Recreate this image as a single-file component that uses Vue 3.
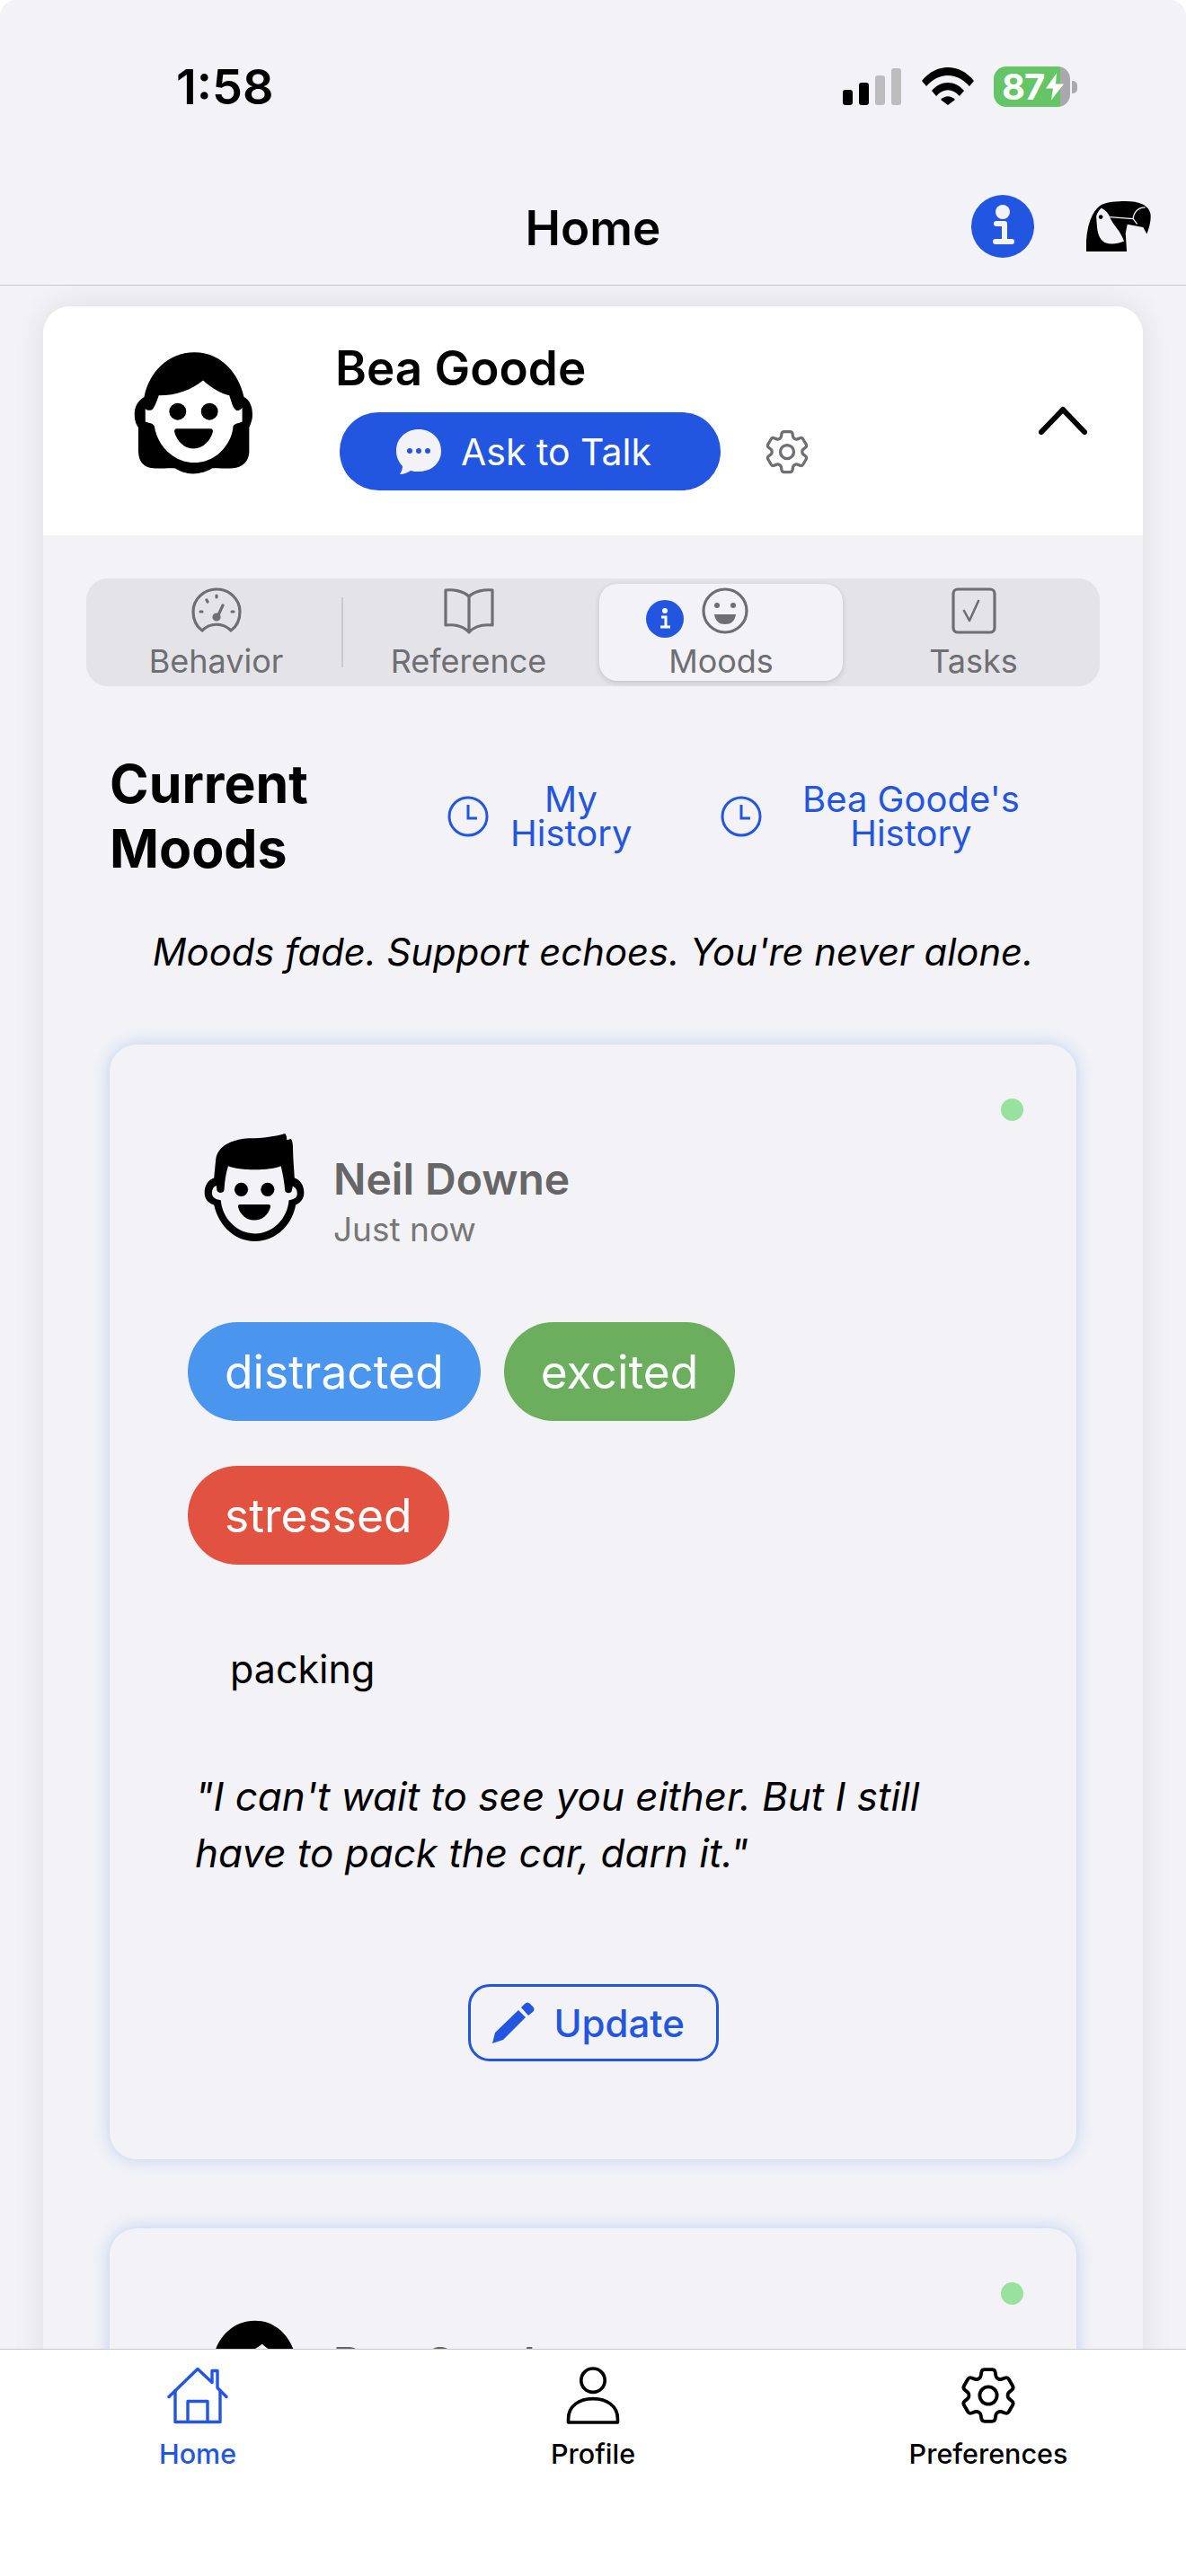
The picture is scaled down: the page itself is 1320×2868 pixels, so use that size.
<template>
  <div class="screen">
    <!-- top bars -->
    <header class="top">
      <div class="status">
        <span class="time">1:58</span>
        <div class="status-icons">
          <svg class="signal" viewBox="0 0 65 41">
            <rect x="0" y="24" width="11" height="17" rx="3" fill="#000" />
            <rect x="18" y="16" width="11" height="25" rx="3" fill="#000" />
            <rect x="36" y="8" width="11" height="33" rx="3" fill="#bdbdc0" />
            <rect x="54" y="0" width="11" height="41" rx="3" fill="#bdbdc0" />
          </svg>
          <svg class="wifi" viewBox="0 0 58 42">
            <path d="M0 15C16-5 42-5 58 15l-5 6C39 5 19 5 5 21z" fill="#000" />
            <path d="M11 26C21 14 37 14 47 26l-5 6C34 23 24 23 16 32z" fill="#000" />
            <path d="M21 36c5-5 11-5 16 0l-8 6z" fill="#000" />
          </svg>
          <div class="battery">
            <div class="battery-body">
              <span class="battery-num">87</span>
              <svg class="bolt" viewBox="0 0 20 30"><path d="M12 0L0 17h8L6 30 20 12h-9z" fill="#fff" /></svg>
            </div>
            <div class="battery-nub"></div>
          </div>
        </div>
      </div>
      <div class="nav">
        <h1 class="nav-title">Home</h1>
        <svg class="nav-info" viewBox="0 0 70 70">
          <circle cx="35" cy="35" r="35" fill="#2356e0" />
          <circle cx="35" cy="19" r="8" fill="#f2f2f7" />
          <path d="M28 32h9v20M27 52h18" fill="none" stroke="#f2f2f7" stroke-width="6" stroke-linecap="round" stroke-linejoin="round" />
        </svg>
        <svg class="toucan" viewBox="0 0 214 166">
          <path d="M0 166V130C3 80 20 30 50 12 70 2 100 0 130 0c40 0 75 10 82 40 4 20-4 50-12 68l-4-8-8-14-52-10-6 30 4 60z" fill="#000" />
          <path d="M33 50C36 38 42 30 50 22c14 8 24 18 28 30 4 14 18 30 28 44 8 12 14 24 19 36-20 8-40 12-60 6-20-8-28-30-30-60z" fill="#f2f2f7" />
          <circle cx="48" cy="52" r="7" fill="#000" />
          <path d="M78 52l77 6 13 17M155 58c2-22 16-38 40-38" fill="none" stroke="#f2f2f7" stroke-width="4" />
        </svg>
      </div>
    </header>

    <main class="scroll">
      <section class="panel">
        <div class="panel-head">
          <svg class="head-avatar" viewBox="140 88 415 425">
            <path d="M350 92c90 0 150 68 170 153 25 13 32 45 28 75-3 15-8 25-10 30v80c0 40-28 60-68 60-30 0-50-2-60 0-15 10-40 18-65 18s-45-8-60-18c-15-2-35 0-65 0-40 0-62-20-62-60v-80c-8-10-13-25-13-45 0-25 10-47 33-60C195 160 260 92 350 92z" fill="#000" />
            <path d="M380 188c30 27 60 44 90 52 8 25 13 45 25 52 10 0 17-7 19-10v48c-9 5-24 5-31 15-3 55-53 125-133 125s-130-70-137-125c-5-10-18-10-31-15v-45c3 5 13 7 21 5 9-5 17-25 25-50 62 0 112-20 152-52z" fill="#fff" />
            <circle cx="293" cy="295" r="29" fill="#000" />
            <circle cx="402" cy="295" r="29" fill="#000" />
            <path d="M290 354h115c7 0 10 6 8 12-8 29-33 56-66 56s-57-27-65-56c-2-6 2-12 8-12z" fill="#000" />
          </svg>
          <div class="head-info">
            <div class="head-name">Bea Goode</div>
            <div class="head-actions">
              <button class="talk-btn">
                <svg class="talk-icon" viewBox="0 0 50 50">
                  <path d="M25 0c14 0 25 10 25 24S39 47 25 47c-3 0-6 0-9-1-3 2-7 4-12 4 2-3 3-6 3-9C3 37 0 31 0 24 0 10 11 0 25 0z" fill="#f2f2f7" />
                  <circle cx="15" cy="24" r="3" fill="#2356e0" />
                  <circle cx="25" cy="24" r="3" fill="#2356e0" />
                  <circle cx="35" cy="24" r="3" fill="#2356e0" />
                </svg>
                <span>Ask to Talk</span>
              </button>
              <svg class="head-gear" viewBox="2 2 20 20" fill="none" stroke="#6e6e73" stroke-width="1.3">
                <path :d="gearPath" />
                <circle cx="12" cy="12" r="3" />
              </svg>
            </div>
          </div>
          <svg class="chevron" viewBox="0 0 54 32">
            <path d="M3 29L27 4l24 25" fill="none" stroke="#000" stroke-width="6" stroke-linecap="round" stroke-linejoin="round" />
          </svg>
        </div>

        <nav class="tabs">
          <div v-for="tab in tabs" :key="tab.name" class="tab" :class="{ active: tab.name === 'Moods' }">
            <svg class="tab-icon" viewBox="0 0 56 52" fill="none" stroke="#6e6e73" stroke-width="3.2" stroke-linecap="round" stroke-linejoin="round">
              <template v-if="tab.name === 'Behavior'">
                <path d="M12 48C5 43 2 35 2 27a26 25 0 0 1 52 0c0 8-3 16-10 21-9-9-23-9-32 0z" />
                <path d="M28 35l7-15M10 27h2M45 27h2M17 14l1 2M28 9v2" />
                <circle cx="28" cy="33" r="3" fill="#6e6e73" />
              </template>
              <template v-else-if="tab.name === 'Reference'">
                <path d="M28 10C22 4 10 2 2 3v39c10-1 20 1 26 8 6-7 16-9 26-8V3c-8-1-20 1-26 7zM28 10v40" />
              </template>
              <template v-else-if="tab.name === 'Moods'">
                <circle cx="28" cy="26" r="24" />
                <circle cx="19" cy="20" r="3" fill="#6e6e73" stroke="none" />
                <circle cx="37" cy="20" r="3" fill="#6e6e73" stroke="none" />
                <path d="M16 30h24c-1 8-6 11-12 11s-11-3-12-11z" fill="#6e6e73" stroke="none" />
              </template>
              <template v-else>
                <rect x="5" y="2" width="46" height="48" rx="5" />
                <path d="M17 26l6 11 10-22" stroke-width="2.6" />
              </template>
            </svg>
            <svg v-if="tab.name === 'Moods'" class="tab-badge" viewBox="0 0 42 42">
              <circle cx="21" cy="21" r="21" fill="#2356e0" />
              <circle cx="21" cy="12" r="3" fill="#fff" />
              <path d="M17 19h5v11M16 30h11" fill="none" stroke="#fff" stroke-width="3" />
            </svg>
            <span class="tab-label">{{ tab.name }}</span>
            <i v-if="tab.name === 'Behavior'" class="tab-divider"></i>
          </div>
        </nav>

        <div class="moods-head">
          <h2 class="moods-title">Current<br />Moods</h2>
          <a v-for="link in historyLinks" :key="link.line1" class="history" :class="link.cls">
            <svg class="clock" viewBox="0 0 46 46" fill="none" stroke="#2356e0" stroke-width="3">
              <circle cx="23" cy="23" r="21" />
              <path d="M23 10v15h10" />
            </svg>
            <span class="history-text">{{ link.line1 }}<br />History</span>
          </a>
        </div>

        <p class="motto">Moods fade. Support echoes. You're never alone.</p>

        <article class="mood-card">
          <i class="online-dot"></i>
          <div class="person">
            <svg class="person-avatar" viewBox="78 60 340 368">
              <path d="M352 62c6 8 6 16 6 22l14-4c8 10 6 30 8 70l4 62c21 6 32 28 32 50 0 23-16 36-28 41-10 62-63 123-138 123s-125-61-138-123c-17-5-32-18-32-41 0-24 12-44 32-50l6-62c4-45 52-68 112-72 50 0 90-6 122-16z" fill="#000" />
              <path d="M160 172c40 16 140 16 178 0 7 28 12 58 14 83 2 10 18 10 22 3l4-18c12 5 15 15 15 25 0 13-8 18-28 22-5 63-55 113-115 113s-110-50-115-113c-20-4-30-9-30-25 0-12 5-19 15-24l2 17c4 10 20 10 24 0 2-30 6-60 14-83z" fill="#f2f2f7" />
              <circle cx="204" cy="251" r="23" fill="#000" />
              <circle cx="293" cy="251" r="23" fill="#000" />
              <path d="M200 302h96c6 0 8 4 6 10-6 23-27 43-54 43-26 0-48-20-54-43-2-6 0-10 6-10z" fill="#000" />
            </svg>
            <div class="person-text">
              <div class="person-name">Neil Downe</div>
              <div class="person-time">Just now</div>
            </div>
          </div>
          <div class="chips">
            <span v-for="chip in chips" :key="chip.label" class="chip" :style="{ background: chip.color }">{{ chip.label }}</span>
          </div>
          <p class="activity">packing</p>
          <p class="quote">"I can't wait to see you either. But I still have to pack the car, darn it."</p>
          <div class="update-row">
            <button class="update-btn">
              <svg class="pencil" viewBox="0 0 48 46">
                <path d="M1 46l3-12L30 9l8 8-25 25z" fill="#2356e0" />
                <path d="M33 6l4-4c2-2 4-2 6 0l3 3c2 2 2 4 0 6l-5 4z" fill="#2356e0" />
              </svg>
              <span>Update</span>
            </button>
          </div>
        </article>

        <article class="mood-card">
          <i class="online-dot"></i>
          <div class="person">
            <svg class="person-avatar" viewBox="140 88 415 425">
              <path d="M350 92c90 0 150 68 170 153 25 13 32 45 28 75-3 15-8 25-10 30v80c0 40-28 60-68 60-30 0-50-2-60 0-15 10-40 18-65 18s-45-8-60-18c-15-2-35 0-65 0-40 0-62-20-62-60v-80c-8-10-13-25-13-45 0-25 10-47 33-60C195 160 260 92 350 92z" fill="#000" />
              <path d="M380 188c30 27 60 44 90 52 8 25 13 45 25 52 10 0 17-7 19-10v48c-9 5-24 5-31 15-3 55-53 125-133 125s-130-70-137-125c-5-10-18-10-31-15v-45c3 5 13 7 21 5 9-5 17-25 25-50 62 0 112-20 152-52z" fill="#f2f2f7" />
            </svg>
            <div class="person-text">
              <div class="person-name">Bea Goode</div>
            </div>
          </div>
        </article>
      </section>
    </main>

    <!-- bottom navigation -->
    <footer class="bottom">
      <div class="bottom-item current">
        <svg class="bottom-icon" viewBox="0 0 68 63" fill="none" stroke="#2356e0" stroke-width="3.4" stroke-linejoin="round" stroke-linecap="round">
          <path d="M2 33L34 2l16 15V4h6v19l10 10" />
          <path d="M9 26v35h50V26M23 61V38h22v23" />
        </svg>
        <span>Home</span>
      </div>
      <div class="bottom-item">
        <svg class="bottom-icon" viewBox="0 0 58 63" fill="none" stroke="#000" stroke-width="3.6" stroke-linejoin="round">
          <circle cx="29" cy="15" r="13" />
          <path d="M2 61v-4c0-14 12-22 27-22s27 8 27 22v4z" />
        </svg>
        <span>Profile</span>
      </div>
      <div class="bottom-item">
        <svg class="bottom-icon" viewBox="2 2 20 20" fill="none" stroke="#000" stroke-width="1.2">
          <path :d="gearPath" />
          <circle cx="12" cy="12" r="3" />
        </svg>
        <span>Preferences</span>
      </div>
    </footer>
  </div>
</template>

<script setup>
const gearPath = 'M9.594 3.94c.09-.542.56-.94 1.11-.94h2.593c.55 0 1.02.398 1.11.94l.213 1.281c.063.374.313.686.645.87.074.04.147.083.22.127.325.196.72.257 1.075.124l1.217-.456a1.125 1.125 0 0 1 1.37.49l1.296 2.247a1.125 1.125 0 0 1-.26 1.431l-1.003.827c-.293.241-.438.613-.43.992a7.723 7.723 0 0 1 0 .255c-.008.378.137.75.43.991l1.004.827c.424.35.534.955.26 1.43l-1.298 2.247a1.125 1.125 0 0 1-1.369.491l-1.217-.456c-.355-.133-.75-.072-1.076.124a6.47 6.47 0 0 1-.22.128c-.331.183-.581.495-.644.869l-.213 1.281c-.09.543-.56.94-1.11.94h-2.594c-.55 0-1.019-.398-1.11-.94l-.213-1.281c-.062-.374-.312-.686-.644-.87a6.52 6.52 0 0 1-.22-.127c-.325-.196-.72-.257-1.076-.124l-1.217.456a1.125 1.125 0 0 1-1.369-.49l-1.297-2.247a1.125 1.125 0 0 1 .26-1.431l1.004-.827c.292-.24.437-.613.43-.991a6.932 6.932 0 0 1 0-.255c.007-.38-.138-.751-.43-.992l-1.004-.827a1.125 1.125 0 0 1-.26-1.43l1.297-2.247a1.125 1.125 0 0 1 1.37-.491l1.216.456c.356.133.751.072 1.076-.124.072-.044.146-.086.22-.128.332-.183.582-.495.644-.869l.214-1.28Z'

const tabs = [{ name: 'Behavior' }, { name: 'Reference' }, { name: 'Moods' }, { name: 'Tasks' }]

const historyLinks = [
  { line1: 'My', cls: 'history-mine' },
  { line1: "Bea Goode's", cls: 'history-hers' }
]

const chips = [
  { label: 'distracted', color: '#4a96ee' },
  { label: 'excited', color: '#6aae5e' },
  { label: 'stressed', color: '#e25241' }
]
</script>

<style>
html,
body {
  margin: 0;
  background: #fff;
}
</style>

<style scoped>
.screen {
  width: 1320px;
  height: 2868px;
  display: flex;
  flex-direction: column;
  overflow: hidden;
  background: #f2f2f7;
  border-radius: 18px 18px 0 0;
  font-family: Inter, "Liberation Sans", sans-serif;
  color: #000;
}

.top {
  flex: none;
  height: 317px;
  border-bottom: 1px solid #c6c6cb;
  box-sizing: content-box;
}

.status {
  height: 194px;
  display: flex;
  align-items: flex-start;
  justify-content: space-between;
}

.time {
  margin: 64px 0 0 196px;
  font-size: 54px;
  line-height: 66px;
  font-weight: 600;
}

.status-icons {
  display: flex;
  align-items: flex-start;
  margin: 74px 121px 0 0;
}

.signal {
  width: 65px;
  height: 41px;
  margin-top: 2px;
}

.wifi {
  width: 58px;
  height: 42px;
  margin: 1px 22px 0 23px;
}

.battery {
  display: flex;
  align-items: center;
}

.battery-body {
  width: 85px;
  height: 45px;
  border-radius: 14px;
  background: linear-gradient(to right, #65c466 87%, #a9a9ac 87%);
  display: flex;
  align-items: center;
  padding-left: 9px;
  box-sizing: border-box;
}

.battery-num {
  color: #fff;
  font-size: 40px;
  line-height: 45px;
  font-weight: 700;
  letter-spacing: -1px;
}

.bolt {
  width: 20px;
  height: 33px;
  margin-left: 2px;
  flex: none;
}

.battery-nub {
  width: 6px;
  height: 14px;
  margin-left: 2px;
  background: #a9a9ac;
  border-radius: 0 5px 5px 0;
}

.nav {
  position: relative;
  height: 123px;
  display: flex;
  align-items: center;
  justify-content: center;
}

.nav-title {
  margin: 0 0 3px;
  font-size: 53px;
  line-height: 62px;
  font-weight: 600;
}

.nav-info {
  position: absolute;
  left: 1081px;
  top: 23px;
  width: 70px;
  height: 70px;
}

.toucan {
  position: absolute;
  left: 1209px;
  top: 30px;
  width: 72px;
  height: 56px;
}

.scroll {
  flex: 1;
  min-height: 0;
  overflow: hidden;
}

.panel {
  margin: 23px 48px 0;
  border-radius: 30px 30px 0 0;
  background: #f2f2f7;
  box-shadow: 0 0 36px rgba(0, 0, 0, 0.09);
}

.panel-head {
  position: relative;
  height: 255px;
  background: #fff;
  border-radius: 30px 30px 0 0;
  display: flex;
}

.head-avatar {
  width: 135px;
  height: 138px;
  margin: 50px 0 0 100px;
  flex: none;
}

.head-info {
  margin-left: 90px;
}

.head-name {
  margin-top: 36px;
  font-size: 53px;
  line-height: 66px;
  font-weight: 600;
}

.head-actions {
  display: flex;
  align-items: center;
  margin-top: 16px;
}

.talk-btn {
  width: 424px;
  height: 87px;
  margin-left: 5px;
  padding: 0 0 0 63px;
  border: none;
  border-radius: 44px;
  background: #2356e0;
  color: #fff;
  font: 400 41px Inter, "Liberation Sans", sans-serif;
  display: flex;
  align-items: center;
}

.talk-icon {
  width: 50px;
  height: 50px;
  margin-right: 22px;
}

.head-gear {
  width: 50px;
  height: 50px;
  margin-left: 49px;
}

.chevron {
  position: absolute;
  left: 1108px;
  top: 111px;
  width: 54px;
  height: 32px;
}

.tabs {
  margin: 48px 48px 0;
  height: 120px;
  padding: 6px 0 6px 4px;
  box-sizing: border-box;
  background: #e3e3e8;
  border-radius: 24px;
  display: grid;
  grid-template-columns: repeat(4, 1fr);
}

.tab {
  position: relative;
  display: flex;
  flex-direction: column;
  align-items: center;
  border-radius: 20px;
}

.tab.active {
  margin: 0 5px;
  background: #f2f2f7;
  box-shadow: 0 2px 6px rgba(0, 0, 0, 0.14);
}

.tab.active .tab-icon {
  margin-left: 8px;
}

.tab-icon {
  width: 56px;
  height: 52px;
  margin-top: 4px;
  flex: none;
}

.tab-label {
  margin-top: 8px;
  font-size: 36px;
  line-height: 44px;
  color: #6e6e73;
}

.tab-badge {
  position: absolute;
  left: 52px;
  top: 18px;
  width: 42px;
  height: 42px;
}

.tab-divider {
  position: absolute;
  right: -1px;
  top: 15px;
  width: 2px;
  height: 78px;
  background: #c9c9cd;
}

.moods-head {
  height: 144px;
  margin-top: 73px;
  padding-left: 74px;
  display: flex;
  align-items: center;
}

.moods-title {
  width: 376px;
  flex: none;
  margin: 0;
  font-size: 59px;
  line-height: 72px;
  font-weight: 700;
}

.history {
  display: flex;
  align-items: center;
  color: #2356e0;
  font-size: 40px;
  line-height: 38px;
  text-align: center;
}

.clock {
  width: 46px;
  height: 46px;
  flex: none;
}

.history-mine {
  width: 304px;
  flex: none;
}

.history-mine .history-text {
  width: 135px;
  margin-left: 24px;
}

.history-hers .history-text {
  margin-left: 45px;
  white-space: nowrap;
}

.motto {
  margin: 54px 0 0;
  font-size: 41.8px;
  line-height: 50px;
  font-style: italic;
  text-align: center;
}

.mood-card {
  position: relative;
  margin: 78px 74px 0;
  padding: 98px 0 109px;
  background: #f2f2f7;
  border-radius: 30px;
  box-shadow: 0 0 18px rgba(74, 144, 226, 0.32);
}

.mood-card + .mood-card {
  margin-top: 77px;
}

.online-dot {
  position: absolute;
  right: 59px;
  top: 60px;
  width: 25px;
  height: 25px;
  border-radius: 50%;
  background: #98e2a0;
}

.person {
  display: flex;
  padding-left: 105px;
}

.person-avatar {
  width: 112px;
  height: 122px;
  flex: none;
}

.person-text {
  margin: 23px 0 0 32px;
}

.person-name {
  font-size: 48px;
  line-height: 58px;
  font-weight: 600;
  color: #666;
}

.person-time {
  margin-top: 4px;
  font-size: 37px;
  line-height: 46px;
  color: #777;
}

.chips {
  width: 760px;
  margin: 80px 0 0 87px;
  display: flex;
  flex-wrap: wrap;
  gap: 50px 26px;
}

.chip {
  height: 110px;
  padding: 0 41px;
  border-radius: 55px;
  color: #fff;
  font-size: 51.5px;
  line-height: 110px;
}

.activity {
  margin: 91px 0 0 134px;
  font-size: 43px;
  line-height: 50px;
}

.quote {
  margin: 86px 110px 0 95px;
  font-size: 44px;
  line-height: 63px;
  font-style: italic;
}

.update-row {
  margin-top: 114px;
  display: flex;
  justify-content: center;
}

.update-btn {
  width: 279px;
  height: 86px;
  border: 3px solid #2356e0;
  border-radius: 24px;
  background: transparent;
  color: #2356e0;
  font: 500 42px Inter, "Liberation Sans", sans-serif;
  display: flex;
  align-items: center;
  padding: 0 0 0 23px;
  box-sizing: border-box;
}

.pencil {
  width: 48px;
  height: 46px;
  margin-right: 22px;
}

.bottom {
  flex: none;
  position: relative;
  height: 252px;
  background: #fff;
  border-top: 1px solid #c8c8cc;
  display: grid;
  grid-template-columns: repeat(3, 1fr);
}

.bottom-item {
  display: flex;
  flex-direction: column;
  align-items: center;
  padding-top: 19px;
  font-size: 30.5px;
  line-height: 36px;
  font-weight: 500;
  color: #000;
}

.bottom-item.current {
  color: #2356e0;
}

.bottom-icon {
  width: 68px;
  height: 64px;
  margin-bottom: 15px;
}
</style>
